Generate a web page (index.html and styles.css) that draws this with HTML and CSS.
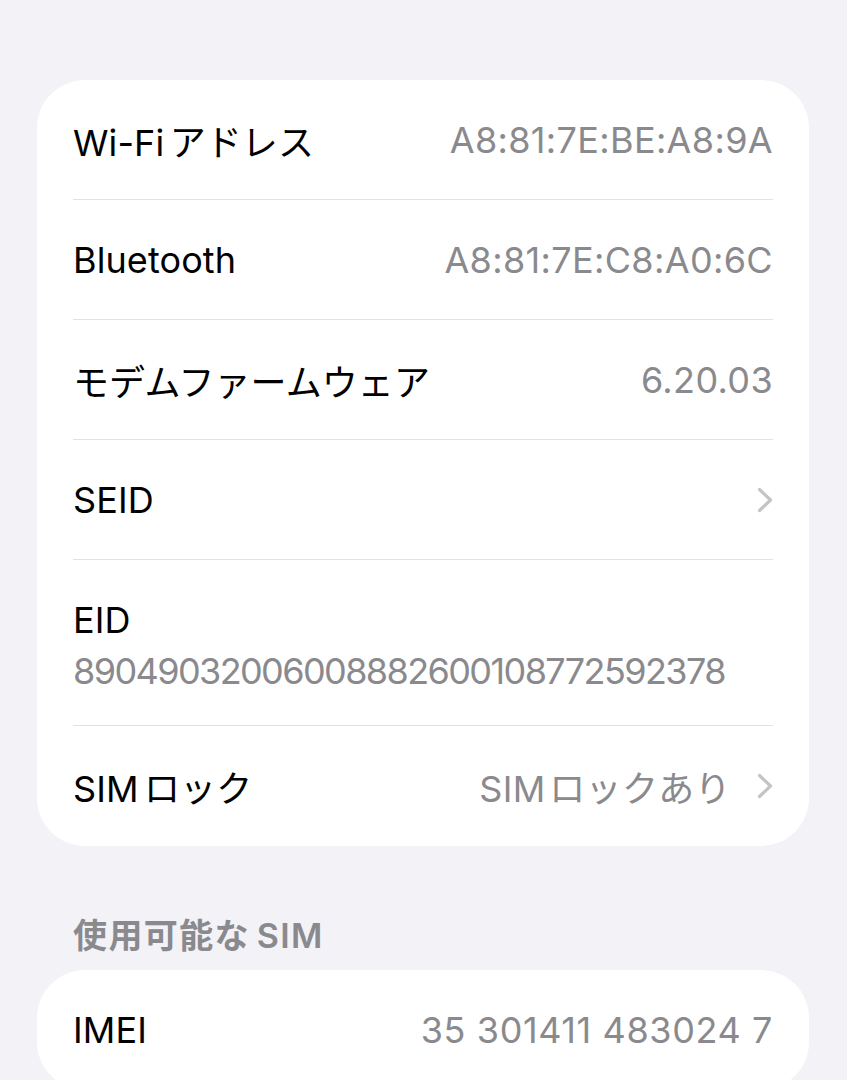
FILE: index.html
```html
<!DOCTYPE html>
<html lang="ja">
<head>
    <meta charset="UTF-8">
    <meta name="viewport" content="width=device-width, initial-scale=1.0">
    <title>情報</title>
    <link rel="stylesheet" href="styles.css">
</head>
<body>

<div class="page">
    <div class="group">
        <div class="row">
            <span class="label"><span class="en">Wi-Fi</span>アドレス</span>
            <span class="value">A8:81:7E:BE:A8:9A</span>
        </div>
        <div class="row">
            <span class="label">Bluetooth</span>
            <span class="value">A8:81:7E:C8:A0:6C</span>
        </div>
        <div class="row">
            <span class="label">モデムファームウェア</span>
            <span class="value">6.20.03</span>
        </div>
        <div class="row">
            <span class="label">SEID</span>
            <svg class="chevron" viewBox="0 0 16 26" width="16" height="26">
                <path d="M2.5 2.5 L13.5 13 L2.5 23.5" fill="none" stroke="#c4c4c7" stroke-width="3.2" stroke-linecap="round" stroke-linejoin="round"/>
            </svg>
        </div>
        <div class="row stacked">
            <span class="label">EID</span>
            <span class="value eid">89049032006008882600108772592378</span>
        </div>
        <div class="row">
            <span class="label"><span class="en">SIM</span>ロック</span>
            <span class="value-link">
                <span class="value"><span class="en tight">SIM</span>ロックあり</span>
                <svg class="chevron" viewBox="0 0 16 26" width="16" height="26">
                    <path d="M2.5 2.5 L13.5 13 L2.5 23.5" fill="none" stroke="#c4c4c7" stroke-width="3.2" stroke-linecap="round" stroke-linejoin="round"/>
                </svg>
            </span>
        </div>
    </div>

    <h2 class="section-title">使用可能な<span class="en-after">SIM</span></h2>

    <div class="group">
        <div class="row">
            <span class="label">IMEI</span>
            <span class="value imei">35 301411 483024 7</span>
        </div>
    </div>
</div>

</body>
</html>
```

FILE: styles.css
```css
body {
    margin: 0;
    padding: 0;
    background-color: #f2f2f7; /* iOS grouped background */
    font-family: Inter, "Noto Sans CJK JP", sans-serif;
    color: #000;
}
.page {
    padding: 80px 38px 0 37px;
}
.group {
    background-color: #fff;
    border-radius: 48px;
    padding: 0 36px;
}
.row {
    display: flex;
    justify-content: space-between;
    align-items: center;
    height: 119px;
    border-bottom: 1px solid #e2e2e5;
}
.row:last-child {
    border-bottom: none;
    height: 120px;
}
.row.stacked {
    flex-direction: column;
    justify-content: center;
    align-items: flex-start;
    height: 159px;
    padding-top: 6px;
    gap: 7px;
}
.label,
.value {
    font-size: 36px;
}
.label {
    letter-spacing: 0.1px;
}
.value {
    color: #8a8a8e; /* Secondary gray */
    letter-spacing: 0.35px;
}
.value.eid {
    letter-spacing: -1.6px;
}
.value.imei {
    letter-spacing: 0.6px;
}
/* small gap between latin and kana, like iOS does */
.en {
    margin-right: 0.15em;
}
.en.tight {
    margin-right: 0.1em;
}
.en-after {
    margin-left: 0.2em;
}
.value-link {
    display: flex;
    align-items: center;
    gap: 26px;
}
.chevron {
    display: block;
    flex-shrink: 0;
}
.section-title {
    margin: 0;
    padding: 70px 36px 14px;
    font-size: 34px;
    line-height: 40px;
    font-weight: 600;
    letter-spacing: 1.4px;
    color: #8a8a8e;
}
```
